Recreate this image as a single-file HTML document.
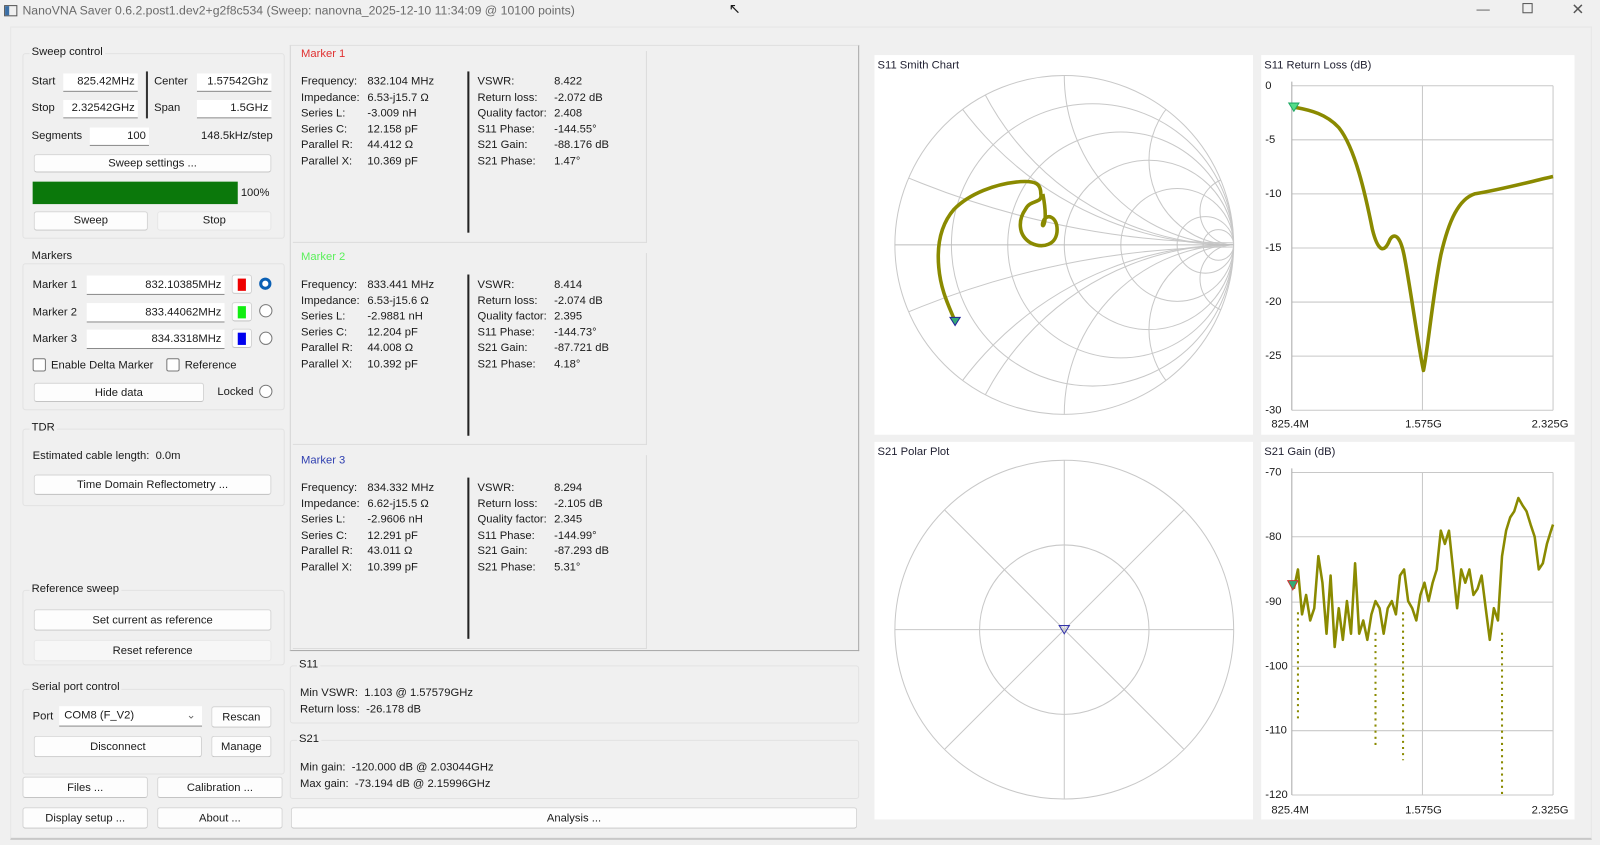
<!DOCTYPE html>
<html><head><meta charset="utf-8">
<style>
html,body{margin:0;padding:0;width:1600px;height:845px;overflow:hidden;background:#f0f0f0;position:relative}
#w{position:absolute;left:0;top:0;width:1568px;height:828px;overflow:hidden;transform:scale(1.0204,1.0205);transform-origin:0 0;font-family:"Liberation Sans",sans-serif;font-size:11px;color:#1a1a1a}
.t{position:absolute;white-space:nowrap}
.g{position:absolute;border:1px solid #e2e2e2;border-radius:3px}
.gl{position:absolute;white-space:nowrap;background:#f0f0f0;padding:0 2px}
.b{position:absolute;background:#fdfdfd;border:1px solid #d4d4d4;border-bottom-color:#c4c4c4;border-radius:3px;text-align:center;box-sizing:border-box}
.in{position:absolute;background:#fff;border-bottom:1px solid #8a8a8a;text-align:right;box-sizing:border-box;padding-right:3px}
.panel{position:absolute;background:#fff}
.mbox{position:absolute;border:1px solid #dcdcdc;border-left:none;border-top:none}
.cb{position:absolute;width:11px;height:11px;border:1px solid #777;border-radius:2px;background:#fff}
.rd{position:absolute;width:11px;height:11px;border:1px solid #777;border-radius:50%;background:#fff}
</style></head><body><div id="w">
<div class="t" style="left:4px;top:5px;width:11px;height:9px;border:1px solid #555"></div>
<div class="t" style="left:5px;top:6px;width:4px;height:9px;background:#3a6ea5"></div>
<div class="t" style="left:22px;top:3px;font-size:12px;color:#6a6a6a">NanoVNA Saver 0.6.2.post1.dev2+g2f8c534 (Sweep: nanovna_2025-12-10 11:34:09 @ 10100 points)</div>
<div class="t" style="left:1447px;top:1px;font-size:13px;color:#555">—</div>
<div class="t" style="left:1492px;top:3px;width:8px;height:8px;border:1px solid #555"></div>
<div class="t" style="left:1540px;top:0px;font-size:15px;color:#555">✕</div>
<div class="t" style="left:714px;top:0px;font-size:14px">↖</div>
<div class="t" style="left:10px;top:26px;width:1548px;height:794px;border:1px solid #e6e6e6;border-bottom:2px solid #c8c8c8"></div>

<div class="g" style="left:22px;top:52px;width:255px;height:180px"></div>
<div class="gl" style="left:29px;top:45px">Sweep control</div>
<div class="t" style="left:31px;top:74px">Start</div>
<div class="in" style="left:62px;top:72px;width:73px;height:18px;padding-top:2px">825.42MHz</div>
<div class="t" style="left:143px;top:70px;width:2px;height:46px;background:#333"></div>
<div class="t" style="left:151px;top:74px">Center</div>
<div class="in" style="left:193px;top:72px;width:73px;height:18px;padding-top:2px">1.57542Ghz</div>
<div class="t" style="left:31px;top:100px">Stop</div>
<div class="in" style="left:62px;top:98px;width:73px;height:18px;padding-top:2px">2.32542GHz</div>
<div class="t" style="left:151px;top:100px">Span</div>
<div class="in" style="left:193px;top:98px;width:73px;height:18px;padding-top:2px">1.5GHz</div>
<div class="t" style="left:31px;top:127px">Segments</div>
<div class="in" style="left:88px;top:125px;width:58px;height:18px;padding-top:2px">100</div>
<div class="t" style="left:197px;top:127px">148.5kHz/step</div>
<div class="b" style="left:33px;top:151px;width:233px;height:18px;padding-top:2px">Sweep settings ...</div>
<div class="t" style="left:32px;top:178px;width:201px;height:22px;background:#0b780b"></div>
<div class="t" style="left:236px;top:183px">100%</div>
<div class="b" style="left:33px;top:207px;width:112px;height:19px;padding-top:2px">Sweep</div>
<div class="b" style="left:154px;top:207px;width:112px;height:19px;padding-top:2px;background:#f7f7f7;border-color:#e6e6e6">Stop</div>

<div class="g" style="left:22px;top:258px;width:255px;height:142px"></div>
<div class="gl" style="left:29px;top:245px">Markers</div>
<div class="t" style="left:32px;top:273px">Marker 1</div>
<div class="in" style="left:85px;top:270px;width:135px;height:19px;padding-top:3px">832.10385MHz</div>
<div class="b" style="left:227px;top:269px;width:20px;height:19px"><div style="margin:3px auto;width:8px;height:12px;background:#e00"></div></div>
<div class="rd" style="left:254px;top:272px;border:3px solid #0a5fb4;width:6px;height:6px"></div>
<div class="t" style="left:32px;top:300px">Marker 2</div>
<div class="in" style="left:85px;top:297px;width:135px;height:19px;padding-top:3px">833.44062MHz</div>
<div class="b" style="left:227px;top:296px;width:20px;height:19px"><div style="margin:3px auto;width:8px;height:12px;background:#1e1"></div></div>
<div class="rd" style="left:254px;top:298px"></div>
<div class="t" style="left:32px;top:326px">Marker 3</div>
<div class="in" style="left:85px;top:323px;width:135px;height:19px;padding-top:3px">834.3318MHz</div>
<div class="b" style="left:227px;top:322px;width:20px;height:19px"><div style="margin:3px auto;width:8px;height:12px;background:#00e"></div></div>
<div class="rd" style="left:254px;top:325px"></div>
<div class="cb" style="left:32px;top:351px"></div>
<div class="t" style="left:50px;top:352px">Enable Delta Marker</div>
<div class="cb" style="left:163px;top:351px"></div>
<div class="t" style="left:181px;top:352px">Reference</div>
<div class="b" style="left:33px;top:375px;width:167px;height:19px;padding-top:3px">Hide data</div>
<div class="t" style="left:213px;top:378px">Locked</div>
<div class="rd" style="left:254px;top:377px"></div>

<div class="g" style="left:22px;top:420px;width:255px;height:74px"></div>
<div class="gl" style="left:29px;top:413px">TDR</div>
<div class="t" style="left:32px;top:441px">Estimated cable length:&nbsp; 0.0m</div>
<div class="b" style="left:33px;top:465px;width:233px;height:20px;padding-top:3px">Time Domain Reflectometry ...</div>

<div class="g" style="left:22px;top:578px;width:255px;height:72px"></div>
<div class="gl" style="left:29px;top:571px">Reference sweep</div>
<div class="b" style="left:33px;top:597px;width:233px;height:21px;padding-top:4px">Set current as reference</div>
<div class="b" style="left:33px;top:627px;width:233px;height:21px;padding-top:4px;background:#f7f7f7;border-color:#e8e8e8">Reset reference</div>

<div class="g" style="left:22px;top:675px;width:255px;height:82px"></div>
<div class="gl" style="left:29px;top:667px">Serial port control</div>
<div class="t" style="left:32px;top:696px">Port</div>
<div class="in" style="left:58px;top:692px;width:140px;height:20px;text-align:left;padding:3px 0 0 5px">COM8 (F_V2)<span style="position:absolute;right:6px;top:2px;color:#666">⌄</span></div>
<div class="b" style="left:207px;top:692px;width:59px;height:21px;padding-top:4px">Rescan</div>
<div class="b" style="left:33px;top:721px;width:165px;height:21px;padding-top:4px">Disconnect</div>
<div class="b" style="left:207px;top:721px;width:59px;height:21px;padding-top:4px">Manage</div>

<div class="b" style="left:22px;top:761px;width:123px;height:21px;padding-top:4px">Files ...</div>
<div class="b" style="left:154px;top:761px;width:123px;height:21px;padding-top:4px">Calibration ...</div>
<div class="b" style="left:22px;top:791px;width:123px;height:21px;padding-top:4px">Display setup ...</div>
<div class="b" style="left:154px;top:791px;width:123px;height:21px;padding-top:4px">About ...</div>

<div class="t" style="left:284px;top:44px;width:556px;height:592px;border:1px solid #a8a8a8;border-top-color:#e0e0e0;border-left-color:#d6d6d6"></div>
<div class="mbox" style="left:287px;top:50px;width:346px;height:187px"></div>
<div class="mbox" style="left:287px;top:248px;width:346px;height:187px"></div>
<div class="mbox" style="left:287px;top:446px;width:346px;height:189px"></div>

<div class="t" style="left:295px;top:47px;color:#e03030">Marker 1</div>
<div class="t" style="left:295px;top:73px;line-height:15.5px">Frequency:<br>Impedance:<br>Series L:<br>Series C:<br>Parallel R:<br>Parallel X:</div>
<div class="t" style="left:360px;top:73px;line-height:15.5px">832.104 MHz<br>6.53-j15.7 Ω<br>-3.009 nH<br>12.158 pF<br>44.412 Ω<br>10.369 pF</div>
<div class="t" style="left:458px;top:70px;width:2px;height:158px;background:#222"></div>
<div class="t" style="left:468px;top:73px;line-height:15.5px">VSWR:<br>Return loss:<br>Quality factor:<br>S11 Phase:<br>S21 Gain:<br>S21 Phase:</div>
<div class="t" style="left:543px;top:73px;line-height:15.5px">8.422<br>-2.072 dB<br>2.408<br>-144.55°<br>-88.176 dB<br>1.47°</div>

<div class="t" style="left:295px;top:246px;color:#5af05a">Marker 2</div>
<div class="t" style="left:295px;top:272px;line-height:15.5px">Frequency:<br>Impedance:<br>Series L:<br>Series C:<br>Parallel R:<br>Parallel X:</div>
<div class="t" style="left:360px;top:272px;line-height:15.5px">833.441 MHz<br>6.53-j15.6 Ω<br>-2.9881 nH<br>12.204 pF<br>44.008 Ω<br>10.392 pF</div>
<div class="t" style="left:458px;top:269px;width:2px;height:158px;background:#222"></div>
<div class="t" style="left:468px;top:272px;line-height:15.5px">VSWR:<br>Return loss:<br>Quality factor:<br>S11 Phase:<br>S21 Gain:<br>S21 Phase:</div>
<div class="t" style="left:543px;top:272px;line-height:15.5px">8.414<br>-2.074 dB<br>2.395<br>-144.73°<br>-87.721 dB<br>4.18°</div>

<div class="t" style="left:295px;top:445px;color:#3040b0">Marker 3</div>
<div class="t" style="left:295px;top:471px;line-height:15.5px">Frequency:<br>Impedance:<br>Series L:<br>Series C:<br>Parallel R:<br>Parallel X:</div>
<div class="t" style="left:360px;top:471px;line-height:15.5px">834.332 MHz<br>6.62-j15.5 Ω<br>-2.9606 nH<br>12.291 pF<br>43.011 Ω<br>10.399 pF</div>
<div class="t" style="left:458px;top:468px;width:2px;height:158px;background:#222"></div>
<div class="t" style="left:468px;top:471px;line-height:15.5px">VSWR:<br>Return loss:<br>Quality factor:<br>S11 Phase:<br>S21 Gain:<br>S21 Phase:</div>
<div class="t" style="left:543px;top:471px;line-height:15.5px">8.294<br>-2.105 dB<br>2.345<br>-144.99°<br>-87.293 dB<br>5.31°</div>

<div class="g" style="left:284px;top:652px;width:556px;height:55px"></div>
<div class="gl" style="left:291px;top:645px">S11</div>
<div class="t" style="left:294px;top:671px;line-height:16px">Min VSWR:&nbsp; 1.103 @ 1.57579GHz<br>Return loss:&nbsp; -26.178 dB</div>
<div class="g" style="left:284px;top:725px;width:556px;height:56px"></div>
<div class="gl" style="left:291px;top:718px">S21</div>
<div class="t" style="left:294px;top:744px;line-height:16px">Min gain:&nbsp; -120.000 dB @ 2.03044GHz<br>Max gain:&nbsp; -73.194 dB @ 2.15996GHz</div>
<div class="b" style="left:285px;top:791px;width:555px;height:21px;padding-top:4px">Analysis ...</div>

<div class="panel" style="left:857px;top:54px;width:371px;height:372px"></div>
<div class="panel" style="left:1236px;top:54px;width:307px;height:372px"></div>
<div class="panel" style="left:857px;top:433px;width:371px;height:370px"></div>
<div class="panel" style="left:1236px;top:433px;width:307px;height:370px"></div>
<div class="t" style="left:860px;top:58px;color:#223">S11 Smith Chart</div>
<div class="t" style="left:1239px;top:58px;color:#223">S11 Return Loss (dB)</div>
<div class="t" style="left:860px;top:437px;color:#223">S21 Polar Plot</div>
<div class="t" style="left:1239px;top:437px;color:#223">S21 Gain (dB)</div>

<svg class="t" style="left:0;top:0;display:block" width="1568" height="828">
<defs><clipPath id="sc"><circle cx="1043" cy="240" r="166"/></clipPath></defs>
<g fill="none" stroke="#c8c8c8" stroke-width="1">
<circle cx="1043" cy="240" r="166"/>
<g clip-path="url(#sc)">
<circle cx="1070.7" cy="240" r="138.3"/>
<circle cx="1098.3" cy="240" r="110.7"/>
<circle cx="1126" cy="240" r="83"/>
<circle cx="1153.7" cy="240" r="55.3"/>
<circle cx="1181.3" cy="240" r="27.7"/>
<circle cx="1194" cy="240" r="15"/>
<circle cx="1209" cy="74" r="166"/><circle cx="1209" cy="406" r="166"/>
<circle cx="1209" cy="-592" r="830"/><circle cx="1209" cy="1072" r="830"/>
<circle cx="1209" cy="-92" r="332"/><circle cx="1209" cy="572" r="332"/>
<circle cx="1209" cy="157" r="83"/><circle cx="1209" cy="323" r="83"/>
<circle cx="1209" cy="207" r="33"/><circle cx="1209" cy="273" r="33"/>
<circle cx="1209" cy="-35" r="275"/><circle cx="1209" cy="515" r="275"/>
</g>
<line x1="877" y1="240" x2="1209" y2="240" stroke="#bbb"/>
<circle cx="1043" cy="617" r="166"/><circle cx="1043" cy="617" r="83"/>
<line x1="877" y1="617" x2="1209" y2="617"/><line x1="1043" y1="451" x2="1043" y2="783"/>
<line x1="926" y1="500" x2="1160" y2="734"/><line x1="926" y1="734" x2="1160" y2="500"/>
<line x1="1266" y1="84" x2="1522" y2="84"/><line x1="1266" y1="137" x2="1522" y2="137"/><line x1="1266" y1="190" x2="1522" y2="190"/><line x1="1266" y1="243" x2="1522" y2="243"/><line x1="1266" y1="296" x2="1522" y2="296"/><line x1="1266" y1="349" x2="1522" y2="349"/><line x1="1266" y1="402" x2="1522" y2="402"/>
<line x1="1394" y1="84" x2="1394" y2="402"/><line x1="1522" y1="84" x2="1522" y2="402"/><line x1="1266" y1="80" x2="1266" y2="402" stroke="#aaa"/>
<line x1="1266" y1="463" x2="1522" y2="463"/><line x1="1266" y1="526" x2="1522" y2="526"/><line x1="1266" y1="590" x2="1522" y2="590"/><line x1="1266" y1="653" x2="1522" y2="653"/><line x1="1266" y1="716" x2="1522" y2="716"/><line x1="1266" y1="779" x2="1522" y2="779"/>
<line x1="1394" y1="463" x2="1394" y2="779"/><line x1="1522" y1="463" x2="1522" y2="779"/><line x1="1266" y1="459" x2="1266" y2="779" stroke="#aaa"/>
</g>
<g fill="none" stroke="#8a8a00" stroke-width="3.5" stroke-linejoin="round">
<path d="M936 315 C930 300 922 285 920 262 C918 240 922 220 935 205 C950 190 975 180 1000 178 C1015 177 1020 180 1020 190 C1022 200 1010 195 1005 205 C998 215 997 230 1010 238 C1022 244 1036 240 1036 225 C1036 212 1025 208 1022 218 C1020 225 1028 222 1022 190"/>
<path d="M1268 105 C1285 108 1300 112 1312 125 C1328 145 1338 190 1345 225 C1350 245 1356 250 1362 235 C1366 228 1372 230 1376 250 C1382 280 1390 340 1395 363 C1399 345 1404 290 1412 250 C1420 215 1430 195 1445 190 C1470 186 1500 178 1522 173"/>
<polyline stroke-width="2.5" points="1268,577 1272,558 1276,602 1280,583 1284,608 1288,596 1292,545 1296,571 1300,621 1304,564 1308,634 1312,596 1316,627 1320,589 1324,621 1328,552 1332,621 1336,608 1340,627 1344,602 1348,589 1352,596 1356,621 1360,596 1364,589 1368,602 1372,564 1376,558 1380,589 1384,596 1388,608 1392,583 1396,571 1400,589 1404,571 1408,558 1412,520 1416,533 1420,520 1424,558 1428,596 1432,558 1436,571 1440,558 1444,583 1448,577 1452,564 1456,596 1460,627 1464,596 1468,608 1472,545 1476,520 1480,507 1484,501 1488,488 1492,495 1496,501 1500,514 1504,526 1508,558 1512,552 1516,533 1520,520 1522,514"/>
</g>
<g stroke="#8a8a00" stroke-width="2" stroke-dasharray="2 4">
<line x1="1272" y1="600" x2="1272" y2="705"/><line x1="1348" y1="620" x2="1348" y2="730"/><line x1="1375" y1="600" x2="1375" y2="745"/><line x1="1472" y1="620" x2="1472" y2="780"/>
</g>
<path d="M931 311 L941 311 L936 319Z" fill="#3a7" stroke="#229"/>
<path d="M1263 101 L1273 101 L1268 109Z" fill="#5d8" stroke="#2a6"/>
<path d="M1262 569 L1272 569 L1267 578Z" fill="#3a7" stroke="#c33"/>
<path d="M1038 613 L1048 613 L1043 621Z" fill="none" stroke="#33a"/>
</svg>
<div class="t" style="left:1240px;top:78px">0</div>
<div class="t" style="left:1240px;top:131px">-5</div>
<div class="t" style="left:1240px;top:184px">-10</div>
<div class="t" style="left:1240px;top:237px">-15</div>
<div class="t" style="left:1240px;top:290px">-20</div>
<div class="t" style="left:1240px;top:343px">-25</div>
<div class="t" style="left:1240px;top:396px">-30</div>
<div class="t" style="left:1246px;top:410px">825.4M</div>
<div class="t" style="left:1377px;top:410px">1.575G</div>
<div class="t" style="left:1501px;top:410px">2.325G</div>
<div class="t" style="left:1240px;top:457px">-70</div>
<div class="t" style="left:1240px;top:520px">-80</div>
<div class="t" style="left:1240px;top:584px">-90</div>
<div class="t" style="left:1240px;top:647px">-100</div>
<div class="t" style="left:1240px;top:710px">-110</div>
<div class="t" style="left:1240px;top:773px">-120</div>
<div class="t" style="left:1246px;top:788px">825.4M</div>
<div class="t" style="left:1377px;top:788px">1.575G</div>
<div class="t" style="left:1501px;top:788px">2.325G</div>
</div></body></html>
